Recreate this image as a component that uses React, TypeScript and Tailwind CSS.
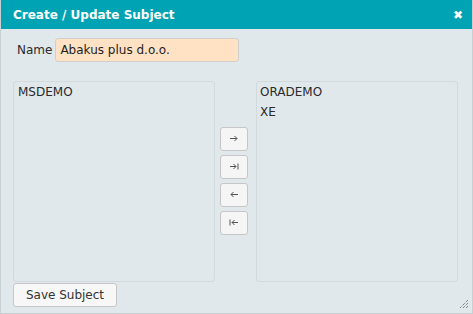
import { useState } from 'react';

const LEFT = ['MSDEMO'];
const RIGHT = ['ORADEMO', 'XE'];

type Move = 'one-right' | 'all-right' | 'one-left' | 'all-left';
const MOVES: Move[] = ['one-right', 'all-right', 'one-left', 'all-left'];

function MoveIcon({ kind }: { kind: Move }) {
  const right = kind === 'one-right' || kind === 'all-right';
  const bar = kind === 'all-right' || kind === 'all-left';
  return (
    <svg width="10" height="7" viewBox="0 0 10 7" fill="none" stroke="#555" strokeWidth="1">
      {right ? (
        <>
          <path d={bar ? 'M1 3.5H7' : 'M1 3.5H8'} />
          <path d={bar ? 'M4.5 1L7 3.5L4.5 6' : 'M5.5 1L8 3.5L5.5 6'} />
          {bar && <path d="M9 0.5V6.5" />}
        </>
      ) : (
        <>
          <path d={bar ? 'M3 3.5H9' : 'M2 3.5H9'} />
          <path d={bar ? 'M5.5 1L3 3.5L5.5 6' : 'M4.5 1L2 3.5L4.5 6'} />
          {bar && <path d="M1 0.5V6.5" />}
        </>
      )}
    </svg>
  );
}

function ResizeGrip() {
  return (
    <svg width="10" height="10" viewBox="0 0 10 10" className="absolute right-[3px] bottom-[4px]">
      <path d="M9 1L1 9M9 4L4 9M9 7L7 9" stroke="#555" strokeWidth="1" strokeDasharray="1 1" />
    </svg>
  );
}

export default function App() {
  const [name, setName] = useState('Abakus plus d.o.o.');

  return (
    <div
      className="relative w-[473px] h-[314px] bg-[#e1e8eb] border-x border-b border-[#c9d0d3] text-[12px] text-[#2a2a2a]"
      style={{ fontFamily: "'DejaVu Sans', Verdana, sans-serif" }}
    >
      <div className="h-[29px] bg-[#00a3b4] flex items-center justify-between pl-[12px] pr-[9px]">
        <span className="text-white font-bold text-[12px]">Create / Update Subject</span>
        <span className="text-white text-[12px] leading-none">✖</span>
      </div>

      <div className="flex items-center mt-[9px] pl-[16px]">
        <span className="mr-[3px]">Name</span>
        <input
          value={name}
          onChange={(e) => setName(e.target.value)}
          className="w-[184px] h-[24px] px-[4px] bg-[#ffe2c4] border border-[#cfcfcf] rounded-[3px] outline-none text-[12px] text-[#222]"
        />
      </div>

      <div className="flex mt-[19px] pl-[12px]">
        <div className="w-[202px] h-[201px] border border-[#d3dadd] rounded-[3px] px-[4px] leading-[20px]">
          {LEFT.map((s) => (
            <div key={s}>{s}</div>
          ))}
        </div>
        <div className="flex flex-col justify-center gap-[4px] ml-[5px] mr-[8px] pb-[2px]">
          {MOVES.map((m) => (
            <button
              key={m}
              className="w-[28px] h-[24px] bg-[#f5f5f5] border border-[#c6c6c6] rounded-[3px] flex items-center justify-center"
            >
              <MoveIcon kind={m} />
            </button>
          ))}
        </div>
        <div className="w-[202px] h-[201px] border border-[#d3dadd] rounded-[3px] px-[3px] leading-[20px]">
          {RIGHT.map((s) => (
            <div key={s}>{s}</div>
          ))}
        </div>
      </div>

      <div className="pl-[12px] mt-[1px]">
        <button className="w-[104px] h-[24px] bg-[#f7f7f7] border border-[#c6c6c6] rounded-[3px] text-[12px] text-[#333]">
          Save Subject
        </button>
      </div>

      <ResizeGrip />
    </div>
  );
}
